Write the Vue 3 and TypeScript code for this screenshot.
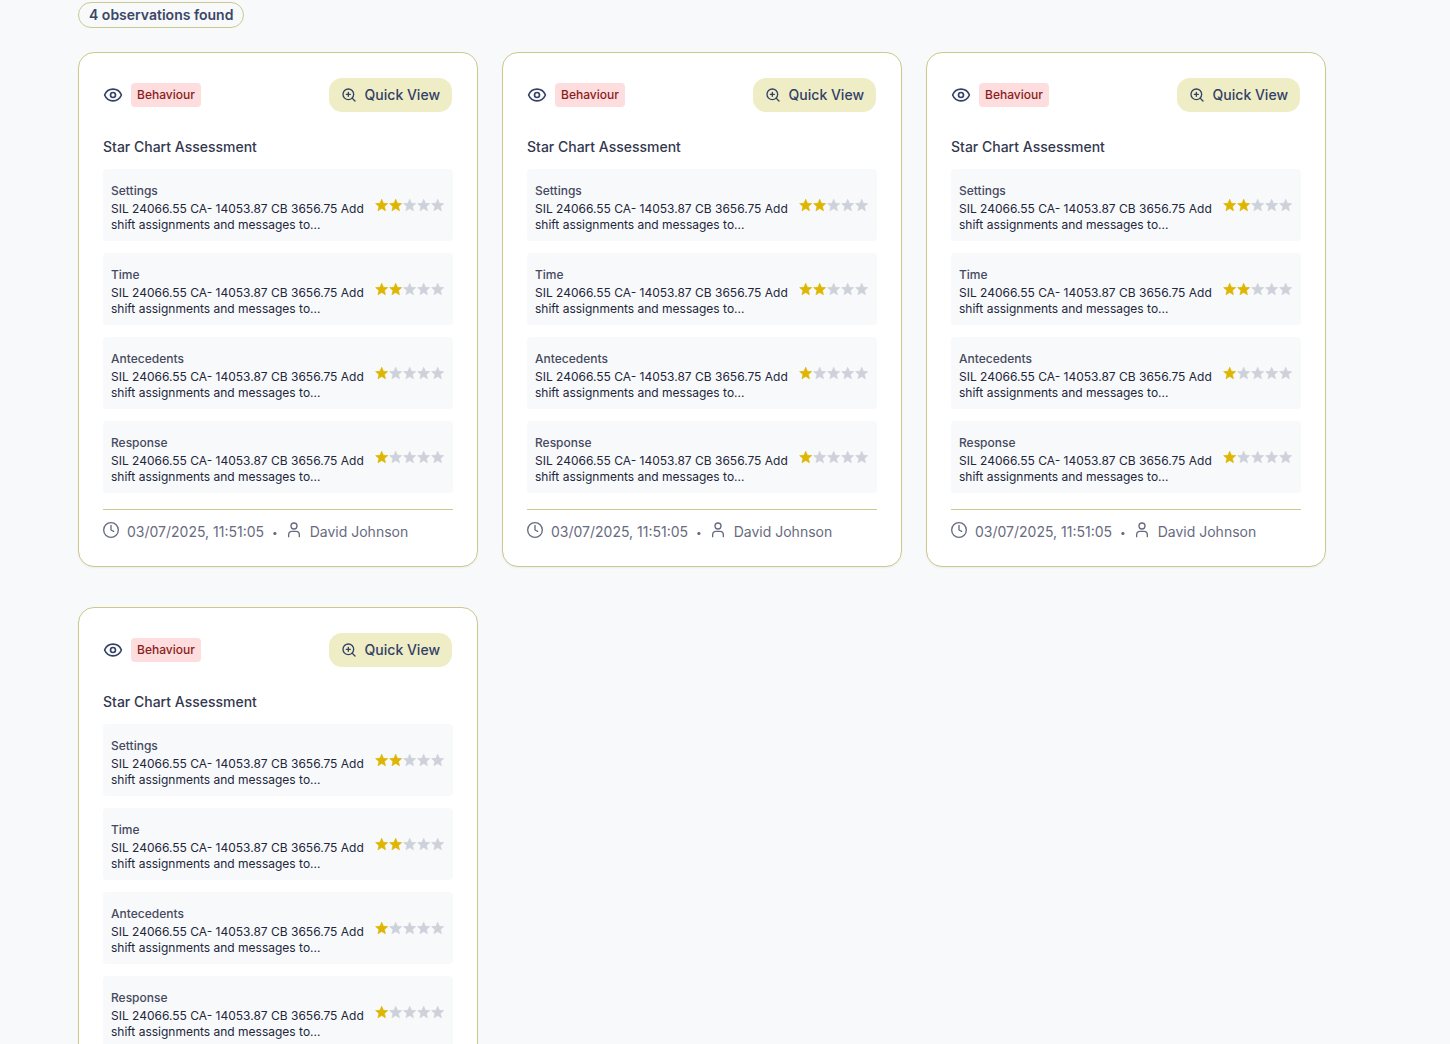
<script setup lang="ts">
interface Rating {
  label: string
  stars: number
}

interface Observation {
  id: number
  type: string
  title: string
  ratings: Rating[]
  date: string
  author: string
}

const note = 'SIL 24066.55 CA- 14053.87 CB 3656.75 Add shift assignments and messages to...'

const observations: Observation[] = [1, 2, 3, 4].map((id) => ({
  id,
  type: 'Behaviour',
  title: 'Star Chart Assessment',
  ratings: [
    { label: 'Settings', stars: 2 },
    { label: 'Time', stars: 2 },
    { label: 'Antecedents', stars: 1 },
    { label: 'Response', stars: 1 },
  ],
  date: '03/07/2025, 11:51:05',
  author: 'David Johnson',
}))
</script>

<template>
  <main class="page">
    <p class="count">{{ observations.length }} observations found</p>

    <section class="grid">
      <article v-for="item in observations" :key="item.id" class="card">
        <header class="card-head">
          <div class="kind">
            <svg class="icon eye" viewBox="0 0 24 24" aria-hidden="true">
              <path d="M2.062 12.348a1 1 0 0 1 0-.696 10.75 10.75 0 0 1 19.876 0 1 1 0 0 1 0 .696 10.75 10.75 0 0 1-19.876 0" />
              <circle cx="12" cy="12" r="3" />
            </svg>
            <span class="tag">{{ item.type }}</span>
          </div>
          <button type="button" class="quick">
            <svg class="icon small" viewBox="0 0 24 24" aria-hidden="true">
              <circle cx="11" cy="11" r="8" />
              <path d="M21 21l-4.35-4.35M11 8v6M8 11h6" />
            </svg>
            Quick View
          </button>
        </header>

        <h2 class="title">{{ item.title }}</h2>

        <ul class="ratings">
          <li v-for="rating in item.ratings" :key="rating.label" class="rating">
            <div class="rating-text">
              <h3 class="label">{{ rating.label }}</h3>
              <p class="note">{{ note }}</p>
            </div>
            <div class="stars" role="img" :aria-label="`${rating.stars} out of 5 stars`">
              <svg
                v-for="n in 5"
                :key="n"
                class="star"
                :class="{ filled: n <= rating.stars }"
                viewBox="1 0 23 23"
              >
                <path d="M12 17.27L18.18 21l-1.64-7.03L22 9.24l-7.19-.61L12 2 9.19 8.63 2 9.24l5.46 4.73L5.82 21z" />
              </svg>
            </div>
          </li>
        </ul>

        <footer class="meta">
          <svg class="icon small" viewBox="0 0 24 24" aria-hidden="true">
            <circle cx="12" cy="12" r="11" />
            <path d="M12 5v7l4 2" />
          </svg>
          <span>{{ item.date }}</span>
          <span class="dot">•</span>
          <svg class="icon small" viewBox="0 0 24 24" aria-hidden="true">
            <path d="M20 22v-3a5 5 0 0 0-5-5H9a5 5 0 0 0-5 5v3" />
            <circle cx="12" cy="6" r="4.5" />
          </svg>
          <span>{{ item.author }}</span>
        </footer>
      </article>
    </section>
  </main>
</template>

<style>
body {
  margin: 0;
  background: #f8f9fb;
}
</style>

<style scoped>
.page {
  box-sizing: border-box;
  min-height: 100vh;
  padding: 2px 124px 40px 78px;
  font-family: Inter, 'Liberation Sans', sans-serif;
  font-size: 14px;
  line-height: 20px;
  color: #334155;
}

.count {
  box-sizing: border-box;
  width: fit-content;
  margin: 0 0 24px;
  padding: 2px 10px;
  border: 1px solid #cbc98d;
  border-radius: 13px;
  font-weight: 600;
  color: #3b4766;
}

.grid {
  display: grid;
  grid-template-columns: repeat(3, minmax(0, 1fr));
  gap: 40px 24px;
}

.card {
  padding: 24px;
  border: 1px solid #cbc98d;
  border-radius: 16px;
  background: #fff;
  box-shadow: 0 1px 2px rgb(0 0 0 / 5%);
}

.card-head {
  display: flex;
  align-items: center;
  justify-content: space-between;
}

.kind {
  display: flex;
  align-items: center;
  gap: 8px;
}

.icon {
  flex: none;
  fill: none;
  stroke: currentColor;
  stroke-width: 2;
  stroke-linecap: round;
  stroke-linejoin: round;
}

.eye {
  width: 20px;
  height: 20px;
  color: #334166;
}

.small {
  width: 16px;
  height: 16px;
}

.tag {
  padding: 4px 6px;
  border-radius: 4px;
  background: #fddddd;
  font-size: 12px;
  font-weight: 500;
  line-height: 16px;
  color: #8b1c1c;
}

.quick {
  display: flex;
  align-items: center;
  gap: 8px;
  height: 36px;
  padding: 0 12px;
  border: 1px solid transparent;
  border-radius: 14px;
  background: #efedc6;
  background-clip: padding-box;
  font: inherit;
  font-weight: 500;
  color: #334166;
  cursor: pointer;
}

.title {
  margin: 24px 0 12px;
  font-size: 14px;
  font-weight: 500;
  line-height: 20px;
  color: #33384f;
}

.ratings {
  display: flex;
  flex-direction: column;
  gap: 12px;
  margin: 0;
  padding: 0;
  list-style: none;
}

.rating {
  display: flex;
  align-items: center;
  justify-content: space-between;
  gap: 8px;
  padding: 14px 8px 8px;
  border-radius: 4px;
  background: #f8f9fb;
  font-size: 12px;
  line-height: 16px;
}

.label {
  margin: 0 0 2px;
  font-size: 12px;
  font-weight: 500;
  line-height: 16px;
  color: #454a60;
}

.note {
  margin: 0;
  color: #22263a;
}

.stars {
  display: flex;
  flex: none;
  margin-bottom: 6px;
}

.star {
  width: 14px;
  height: 14px;
  fill: #cdd1d9;
  stroke: #cdd1d9;
  stroke-width: 1;
  stroke-linejoin: round;
}

.star.filled {
  fill: #deb500;
  stroke: #deb500;
}

.meta {
  display: flex;
  align-items: flex-start;
  gap: 8px;
  margin-top: 16px;
  padding-top: 12px;
  border-top: 1px solid #cbc98d;
  color: #676b80;
}

.dot {
  font-size: 10px;
}
</style>
